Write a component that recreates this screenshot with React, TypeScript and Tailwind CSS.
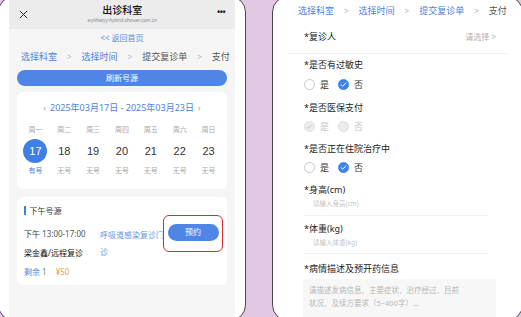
import React from 'react';

const font = "font-['Noto_Sans','Noto_Sans_CJK_SC',sans-serif]";

const weekDays = [
  { w: '周一', d: '17', s: '有号', active: true },
  { w: '周二', d: '18', s: '无号' },
  { w: '周三', d: '19', s: '无号' },
  { w: '周四', d: '20', s: '无号' },
  { w: '周五', d: '21', s: '无号' },
  { w: '周六', d: '22', s: '无号' },
  { w: '周日', d: '23', s: '无号' },
];

const Steps = ({ active, className }: { active: number; className?: string }) => {
  const items = ['选择科室', '选择时间', '提交复诊单', '支付'];
  return (
    <div className={`flex items-center text-[9px] leading-none ${className ?? ''}`}>
      {items.map((s, i) => (
        <React.Fragment key={s}>
          {i > 0 && <span className="mx-[10px] text-[#b5b5b5] text-[8px]">&gt;</span>}
          <span className={i < active ? 'text-[#4d82dc]' : 'text-[#555]'}>{s}</span>
        </React.Fragment>
      ))}
    </div>
  );
};

const Radio = ({ checked, disabled }: { checked?: boolean; disabled?: boolean }) => {
  if (checked) {
    return (
      <svg width="11" height="11" viewBox="0 0 20 20">
        <circle cx="10" cy="10" r="9.5" fill={disabled ? '#ececec' : '#3e82ea'} stroke={disabled ? '#d6d6d6' : '#3e82ea'} strokeWidth="1" />
        <path d="M5.5 10.3 L8.6 13.2 L14.5 7" fill="none" stroke={disabled ? '#c4c4c4' : '#fff'} strokeWidth="1.8" strokeLinecap="round" strokeLinejoin="round" />
      </svg>
    );
  }
  return (
    <span className={`block w-[11px] h-[11px] rounded-full border ${disabled ? 'border-[#dcdcdc] bg-[#ececec]' : 'border-[#c8c8c8] bg-white'}`} />
  );
};

const RadioRow = ({ yes, disabled, className }: { yes: boolean; disabled?: boolean; className?: string }) => (
  <div className={`flex items-center text-[9px] leading-none ${disabled ? 'text-[#c6c6c6]' : 'text-[#333]'} ${className ?? ''}`}>
    <Radio checked={yes} disabled={disabled} />
    <span className="ml-[5px]">是</span>
    <span className="ml-[9px]"><Radio checked={!yes} disabled={disabled} /></span>
    <span className="ml-[5px]">否</span>
  </div>
);

const Label = ({ children, className }: { children: React.ReactNode; className?: string }) => (
  <div className={`text-[9px] leading-none text-[#222] ${className ?? ''}`}>*{children}</div>
);

const LeftPhone = () => (
  <div className="w-[248px] h-[325px] ml-[-2px] shrink-0 rounded-[16px] border border-[#4a4350] bg-white overflow-hidden flex justify-center">
    <div className="w-[226px] h-full bg-[#f5f5f5] flex flex-col items-center">
      <div className="w-full h-[32px] bg-[#ececec] flex items-center justify-between px-[10px] pt-[2px]">
        <svg width="9" height="9" viewBox="0 0 10 10"><path d="M1 1 L9 9 M9 1 L1 9" stroke="#222" strokeWidth="1.1" /></svg>
        <div className="flex flex-col items-center">
          <span className="text-[10px] leading-none text-[#111] font-medium">出诊科室</span>
          <span className="text-[5px] leading-none text-[#888] mt-[3px] font-['Liberation_Sans',sans-serif]">eyshiwyy-hybrid.shouer.com.cn</span>
        </div>
        <span className="text-[10px] leading-none text-[#222] tracking-[-1px] -mt-[4px]">•••</span>
      </div>
      <div className="mt-[5px] text-[8px] leading-none text-[#5b8fe0]">&lt;&lt; 返回首页</div>
      <Steps active={2} className="mt-[10px] w-full pl-[12px]" />
      <div className="mt-[9px] w-[210px] h-[16px] rounded-full bg-[#4f86e6] text-white text-[8px] flex items-center justify-center">刷新号源</div>
      <div className="mt-[6px] w-[210px] h-[97px] rounded-[6px] bg-white px-[4px] pt-[11px]">
        <div className="flex items-center justify-center text-[9px] leading-none text-[#4d82dc]">
          <span className="text-[#999] mr-[4px] text-[8px]">‹</span>
          <span>2025年03月17日 - 2025年03月23日</span>
          <span className="text-[#999] ml-[4px] text-[8px]">›</span>
        </div>
        <div className="grid grid-cols-7 mt-[14px] text-center">
          {weekDays.map(d => (
            <div key={d.d} className="flex flex-col items-center">
              <span className="text-[7px] leading-none text-[#aaa]">{d.w}</span>
              <span className={`mt-[6px] w-[24px] h-[24px] rounded-full flex items-center justify-center text-[11px] font-['Liberation_Sans',sans-serif] ${d.active ? 'bg-[#3f7fe6] text-white' : 'text-[#333]'}`}>{d.d}</span>
              <span className={`mt-[4px] text-[7px] leading-none ${d.active ? 'text-[#4d82dc]' : 'text-[#aaa]'}`}>{d.s}</span>
            </div>
          ))}
        </div>
      </div>
      <div className="mt-[8px] w-[210px] h-[88px] rounded-[6px] bg-white px-[7px] pt-[9px]">
        <div className="flex items-center">
          <span className="w-[1.5px] h-[9px] bg-[#3f7fe6]" />
          <span className="ml-[4px] text-[8px] leading-none text-[#333]">下午号源</span>
        </div>
        <div className="flex mt-[15px]">
          <div className="w-[76px] shrink-0">
            <div className="text-[8px] leading-none text-[#333] whitespace-nowrap">下午 <span className="text-[#555]">13:00-17:00</span></div>
            <div className="mt-[11px] text-[8px] leading-none text-[#111]">梁金鑫/远程复诊</div>
            <div className="mt-[11px] text-[8px] leading-none"><span className="text-[#4d82dc]">剩余 1</span><span className="ml-[9px] text-[#e8a04a]">¥50</span></div>
          </div>
          <div className="w-[66px] shrink-0 text-[8px] leading-[17px] -mt-[4px] text-[#6b95df]">呼吸道感染复诊门诊</div>
          <div className="shrink-0 -ml-[3px] -mt-[15px] w-[60px] h-[37px] rounded-[6px] border-[1.5px] border-[#e0282e] flex items-center justify-center">
            <span className="w-[51px] h-[17px] mb-[3px] rounded-full bg-[#4f86e6] text-white text-[8px] flex items-center justify-center">预约</span>
          </div>
        </div>
      </div>
    </div>
  </div>
);

const RightPhone = () => (
  <div className="w-[251px] h-[325px] shrink-0 rounded-[16px] border border-[#4a4350] bg-white overflow-hidden">
    <div className="pt-[9px] pl-[25px]">
      <Steps active={3} />
    </div>
    <div className="mt-[17px] ml-[31px] mr-[26px] flex items-center justify-between">
      <Label>复诊人</Label>
      <span className="text-[8px] leading-none text-[#b0b0b0]">请选择 &gt;</span>
    </div>
    <div className="mt-[12px] mx-[14px] h-px bg-[#f0f0f0]" />
    <div className="pl-[31px] pr-[26px]">
      <Label className="mt-[6px]">是否有过敏史</Label>
      <RadioRow yes={false} className="mt-[10px]" />
      <Label className="mt-[13px]">是否医保支付</Label>
      <RadioRow yes disabled className="mt-[9px]" />
      <Label className="mt-[12px]">是否正在住院治疗中</Label>
      <RadioRow yes={false} className="mt-[9px]" />
      <Label className="mt-[12px]">身高(cm)</Label>
      <div className="mt-[7px] ml-[9px] text-[6.5px] leading-none text-[#c4c4c4]">请输入身高(cm)</div>
      <div className="mt-[7px] h-px bg-[#f2f2f2] mr-[7px]" />
      <Label className="mt-[8px]">体重(kg)</Label>
      <div className="mt-[7px] ml-[9px] text-[6.5px] leading-none text-[#c4c4c4]">请输入体重(kg)</div>
      <div className="mt-[7px] h-px bg-[#f2f2f2] mr-[7px]" />
      <Label className="mt-[10px]">病情描述及预开药信息</Label>
      <div className="mt-[6px] -ml-[1px] h-[50px] bg-[#f7f7f7] px-[6px] pt-[5px] text-[7.5px] leading-[13px] text-[#b8b8b8]">
        请描述发病信息、主要症状、治疗经过、目前<br />状况、及续方要求（5~400字）...
      </div>
    </div>
  </div>
);

export default function App() {
  return (
    <div className={`w-[521px] h-[317px] bg-[#e2c7e3] overflow-hidden flex items-center ${font}`}>
      <LeftPhone />
      <div className="w-[26px] shrink-0" />
      <RightPhone />
    </div>
  );
}
